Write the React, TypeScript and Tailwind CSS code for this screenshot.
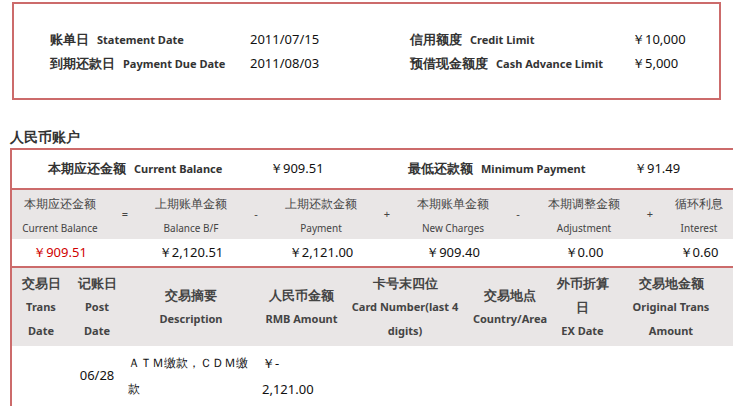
import React from 'react';

const cjk = "font-['SimSun','Noto_Sans_CJK_SC',sans-serif]";
const serif = "font-['Liberation_Serif','Noto_Sans_CJK_SC',serif]";
const num = "font-['DejaVu_Sans','Noto_Sans_CJK_SC',sans-serif]";

const formula = [
  { cn: '本期应还金额', en: 'Current Balance', v: '￥909.51', red: true },
  { op: '=' },
  { cn: '上期账单金额', en: 'Balance B/F', v: '￥2,120.51' },
  { op: '-' },
  { cn: '上期还款金额', en: 'Payment', v: '￥2,121.00' },
  { op: '+' },
  { cn: '本期账单金额', en: 'New Charges', v: '￥909.40' },
  { op: '-' },
  { cn: '本期调整金额', en: 'Adjustment', v: '￥0.00' },
  { op: '+' },
  { cn: '循环利息', en: 'Interest', v: '￥0.60' },
];
const fw = ['w-[96px]', 'w-[34px]', 'w-[98px]', 'w-[32px]', 'w-[98px]', 'w-[34px]', 'w-[98px]', 'w-[32px]', 'w-[100px]', 'w-[32px]', 'w-[66px]'];

const cols = [
  { w: 'w-[58px]', cn: ['交易日'], en: ['Trans', 'Date'] },
  { w: 'w-[54px]', cn: ['记账日'], en: ['Post', 'Date'] },
  { w: 'w-[134px]', cn: ['交易摘要'], en: ['Description'] },
  { w: 'w-[87px]', cn: ['人民币金额'], en: ['RMB Amount'] },
  { w: 'w-[120px]', cn: ['卡号末四位'], en: ['Card Number(last 4', 'digits)'] },
  { w: 'w-[90px]', cn: ['交易地点'], en: ['Country/Area'] },
  { w: 'w-[55px]', cn: ['外币折算', '日'], en: ['EX Date'] },
  { w: 'w-[122px]', cn: ['交易地金额'], en: ['Original Trans', 'Amount'] },
];

const Pair = ({ cn, en, cnw, vx, v }: { cn: string; en: string; cnw: string; vx: string; v: string }) => (
  <div className="flex items-center h-[24px]">
    <span className={`${cnw} font-bold text-[13px] text-[#333] flex items-baseline gap-2 whitespace-nowrap`}>
      <span className={cjk}>{cn}</span>
      <span className={`${serif} text-[11px]`}>{en}</span>
    </span>
    <span className={`${vx} ${num} text-[13px] text-[#111]`}>{v}</span>
  </div>
);

export default function App() {
  return (
    <div className="w-[733px] h-[407px] overflow-hidden bg-white relative">
      <div className="mx-[12px] mt-[2px] h-[98px] border-2 border-[#cc6b6b] pt-[24px] pl-[36px] flex">
        <div className="w-[360px]">
          <Pair cn="账单日" en="Statement Date" cnw="w-[200px]" vx="" v="2011/07/15" />
          <Pair cn="到期还款日" en="Payment Due Date" cnw="w-[200px]" vx="" v="2011/08/03" />
        </div>
        <div>
          <Pair cn="信用额度" en="Credit Limit" cnw="w-[222px]" vx="" v="￥10,000" />
          <Pair cn="预借现金额度" en="Cash Advance Limit" cnw="w-[222px]" vx="" v="￥5,000" />
        </div>
      </div>
      <div className={`${cjk} font-bold text-[14px] text-[#333] pl-[10px] mt-[26px] h-[22px]`}>人民币账户</div>
      <div className="ml-[10px] w-[724px] border-2 border-r-0 border-[#cc6b6b] border-b-0">
        <div className="h-[40px] flex items-center pl-[36px] border-b-2 border-[#cc6b6b] text-[#333]">
          <span className="w-[222px] flex items-baseline gap-2 font-bold text-[13px]">
            <span className={cjk}>本期应还金额</span>
            <span className={`${serif} text-[11px]`}>Current Balance</span>
          </span>
          <span className={`${num} text-[13px] w-[138px] text-[#111]`}>￥909.51</span>
          <span className="w-[226px] flex items-baseline gap-2 font-bold text-[13px]">
            <span className={cjk}>最低还款额</span>
            <span className={`${serif} text-[11px]`}>Minimum Payment</span>
          </span>
          <span className={`${num} text-[13px] text-[#111]`}>￥91.49</span>
        </div>
        <div className="flex bg-[#e9e6e6] h-[49px] text-[#444]">
          {formula.map((f, i) => (
            <div key={i} className={`${fw[i]} flex flex-col items-center justify-center text-center`}>
              {f.op ? (
                <span className={`${num} text-[11px]`}>{f.op}</span>
              ) : (
                <>
                  <span className={`${cjk} text-[12px] leading-[26px]`}>{f.cn}</span>
                  <span className={`${serif} text-[10px] leading-[22px]`}>{f.en}</span>
                </>
              )}
            </div>
          ))}
        </div>
        <div className="flex h-[29px] items-center border-b-2 border-[#cc6b6b]">
          {formula.map((f, i) => (
            <div key={i} className={`${fw[i]} text-center ${num} text-[13px] ${f.red ? 'text-[#d00000]' : 'text-[#111]'}`}>
              {f.v ?? ''}
            </div>
          ))}
        </div>
        <div className="flex bg-[#e9e6e6] h-[78px] text-[#444] font-bold">
          {cols.map((c, i) => (
            <div key={i} className={`${c.w} flex flex-col items-center justify-center text-center`}>
              {c.cn.map((t) => (
                <span key={t} className={`${cjk} text-[13px] leading-[24px]`}>{t}</span>
              ))}
              {c.en.map((t) => (
                <span key={t} className={`${serif} text-[11px] leading-[24px] whitespace-nowrap`}>{t}</span>
              ))}
            </div>
          ))}
        </div>
        <div className="flex h-[60px] items-center text-[#111]">
          <div className="w-[58px]" />
          <div className={`w-[54px] text-center ${num} text-[13px]`}>06/28</div>
          <div className={`w-[134px] pl-[4px] ${cjk} text-[12px] leading-[26px]`}>ＡＴＭ缴款，ＣＤＭ缴款</div>
          <div className={`w-[87px] pl-[4px] ${num} text-[13px] leading-[26px]`}>￥-<br />2,121.00</div>
        </div>
      </div>
    </div>
  );
}
